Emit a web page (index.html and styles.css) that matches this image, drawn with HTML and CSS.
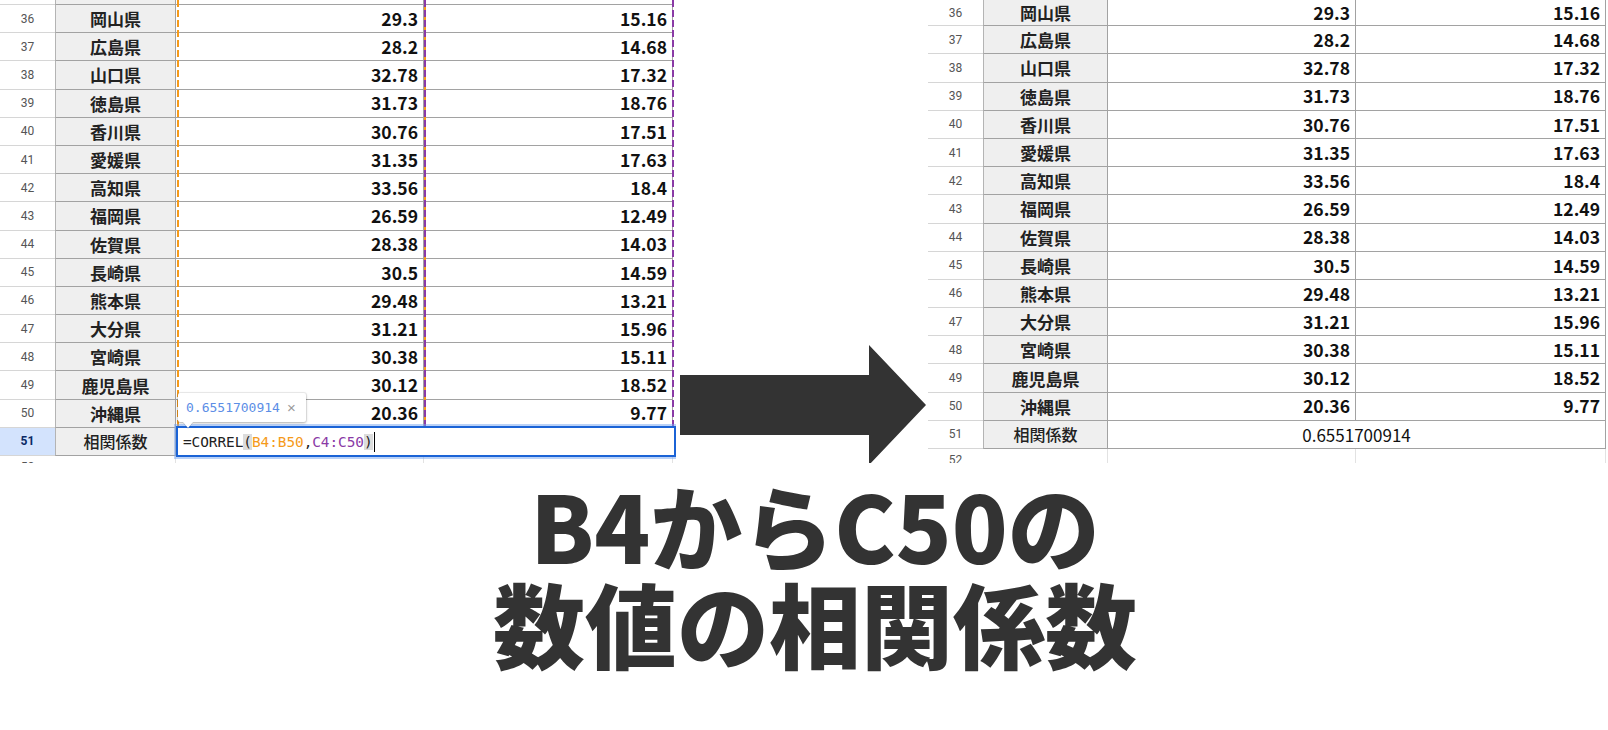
FILE: index.html
```html
<!DOCTYPE html>
<html lang="ja">
<head>
<meta charset="utf-8">
<title>CORREL</title>
<link rel="stylesheet" href="styles.css">
</head>
<body>
<div class="page">
  <div class="top">
    <div class="sheet sheet-left">
      <div class="row row-cut"><div class="rn"></div><div class="nm"></div><div class="num"></div><div class="num"></div></div>
      <div class="row"><div class="rn">36</div><div class="nm">岡山県</div><div class="num">29.3</div><div class="num">15.16</div></div>
      <div class="row"><div class="rn">37</div><div class="nm">広島県</div><div class="num">28.2</div><div class="num">14.68</div></div>
      <div class="row"><div class="rn">38</div><div class="nm">山口県</div><div class="num">32.78</div><div class="num">17.32</div></div>
      <div class="row"><div class="rn">39</div><div class="nm">徳島県</div><div class="num">31.73</div><div class="num">18.76</div></div>
      <div class="row"><div class="rn">40</div><div class="nm">香川県</div><div class="num">30.76</div><div class="num">17.51</div></div>
      <div class="row"><div class="rn">41</div><div class="nm">愛媛県</div><div class="num">31.35</div><div class="num">17.63</div></div>
      <div class="row"><div class="rn">42</div><div class="nm">高知県</div><div class="num">33.56</div><div class="num">18.4</div></div>
      <div class="row"><div class="rn">43</div><div class="nm">福岡県</div><div class="num">26.59</div><div class="num">12.49</div></div>
      <div class="row"><div class="rn">44</div><div class="nm">佐賀県</div><div class="num">28.38</div><div class="num">14.03</div></div>
      <div class="row"><div class="rn">45</div><div class="nm">長崎県</div><div class="num">30.5</div><div class="num">14.59</div></div>
      <div class="row"><div class="rn">46</div><div class="nm">熊本県</div><div class="num">29.48</div><div class="num">13.21</div></div>
      <div class="row"><div class="rn">47</div><div class="nm">大分県</div><div class="num">31.21</div><div class="num">15.96</div></div>
      <div class="row"><div class="rn">48</div><div class="nm">宮崎県</div><div class="num">30.38</div><div class="num">15.11</div></div>
      <div class="row"><div class="rn">49</div><div class="nm">鹿児島県</div><div class="num">30.12</div><div class="num">18.52</div></div>
      <div class="row"><div class="rn">50</div><div class="nm">沖縄県</div><div class="num">20.36</div><div class="num">9.77</div></div>
      <div class="row row-active"><div class="rn">51</div><div class="nm nm-label">相関係数</div><div class="num"></div><div class="num"></div></div>
      <div class="row row-empty"><div class="rn">52</div><div class="nm"></div><div class="num"></div><div class="num"></div></div>

      <div class="range range-b"></div>
      <div class="range range-bc"></div>
      <div class="range range-c"></div>

      <div class="editor">
        <span class="f-dark">=CORREL</span><span class="paren">(</span><span class="f-orange">B4:B50</span><span class="f-dark">,</span><span class="f-purple">C4:C50</span><span class="paren">)</span><span class="caret"></span>
      </div>
      <div class="tip"><span class="tip-val">0.6551700914</span><span class="tip-x">×</span></div>
    </div>

    <div class="arrow-col">
      <svg class="arrow" width="248" height="122" viewBox="0 0 248 122">
        <polygon points="0,31 189,31 189,1 246,61 189,121 189,91 0,91" fill="#333333"/>
      </svg>
    </div>

    <div class="sheet sheet-right">
      <div class="row row-first"><div class="rn">36</div><div class="nm">岡山県</div><div class="num">29.3</div><div class="num">15.16</div></div>
      <div class="row"><div class="rn">37</div><div class="nm">広島県</div><div class="num">28.2</div><div class="num">14.68</div></div>
      <div class="row"><div class="rn">38</div><div class="nm">山口県</div><div class="num">32.78</div><div class="num">17.32</div></div>
      <div class="row"><div class="rn">39</div><div class="nm">徳島県</div><div class="num">31.73</div><div class="num">18.76</div></div>
      <div class="row"><div class="rn">40</div><div class="nm">香川県</div><div class="num">30.76</div><div class="num">17.51</div></div>
      <div class="row"><div class="rn">41</div><div class="nm">愛媛県</div><div class="num">31.35</div><div class="num">17.63</div></div>
      <div class="row"><div class="rn">42</div><div class="nm">高知県</div><div class="num">33.56</div><div class="num">18.4</div></div>
      <div class="row"><div class="rn">43</div><div class="nm">福岡県</div><div class="num">26.59</div><div class="num">12.49</div></div>
      <div class="row"><div class="rn">44</div><div class="nm">佐賀県</div><div class="num">28.38</div><div class="num">14.03</div></div>
      <div class="row"><div class="rn">45</div><div class="nm">長崎県</div><div class="num">30.5</div><div class="num">14.59</div></div>
      <div class="row"><div class="rn">46</div><div class="nm">熊本県</div><div class="num">29.48</div><div class="num">13.21</div></div>
      <div class="row"><div class="rn">47</div><div class="nm">大分県</div><div class="num">31.21</div><div class="num">15.96</div></div>
      <div class="row"><div class="rn">48</div><div class="nm">宮崎県</div><div class="num">30.38</div><div class="num">15.11</div></div>
      <div class="row"><div class="rn">49</div><div class="nm">鹿児島県</div><div class="num">30.12</div><div class="num">18.52</div></div>
      <div class="row"><div class="rn">50</div><div class="nm">沖縄県</div><div class="num">20.36</div><div class="num">9.77</div></div>
      <div class="row row-merged"><div class="rn">51</div><div class="nm nm-label">相関係数</div><div class="merged">0.6551700914</div></div>
      <div class="row row-empty"><div class="rn">52</div><div class="nm"></div><div class="num"></div><div class="num"></div></div>
    </div>
  </div>

  <div class="caption">
    <div class="cap-line">B4からC50の</div>
    <div class="cap-line">数値の相関係数</div>
  </div>
</div>
</body>
</html>
```

FILE: styles.css
```css
* { box-sizing: border-box; }

html, body {
  margin: 0;
  padding: 0;
  background: #ffffff;
}

.page {
  width: 1608px;
  height: 730px;
  overflow: hidden;
  display: flex;
  flex-direction: column;
}

.top {
  display: flex;
  height: 463px;
  overflow: hidden;
}

/* ---------- sheets ---------- */
.sheet {
  position: relative;
  display: flex;
  flex-direction: column;
  overflow: hidden;
  height: 463px;
  flex: none;
}

.sheet-left { width: 676px; }
.sheet-right { width: 680px; }

.row {
  display: grid;
  height: 28.2px;
  flex: none;
}

.sheet-left .row { grid-template-columns: 55px 121px 248px 249px; }
.sheet-right .row { grid-template-columns: 55px 125px 248px 250px; }

.row-cut { height: 5px; }
.row-first { height: 26.2px; }

.rn {
  font-family: Roboto, "Liberation Sans", sans-serif;
  font-size: 12px;
  color: #555555;
  display: flex;
  align-items: center;
  justify-content: center;
  border-bottom: 1px solid #d6d6d6;
}

.nm {
  font-family: "Noto Sans CJK JP", sans-serif;
  font-weight: 700;
  font-size: 17px;
  color: #222222;
  background: #efefef;
  display: flex;
  align-items: center;
  justify-content: center;
  border-left: 1px solid #b4b4b4;
  border-right: 1px solid #a2a2a2;
  border-bottom: 1px solid #a2a2a2;
  line-height: 1;
}

.nm-label {
  font-size: 16px;
  font-weight: 500;
}

.num {
  font-family: "Noto Sans CJK JP", sans-serif;
  font-weight: 700;
  font-size: 17.5px;
  color: #111111;
  display: flex;
  align-items: center;
  justify-content: flex-end;
  padding-right: 5px;
  border-right: 1px solid #a2a2a2;
  border-bottom: 1px solid #a2a2a2;
  line-height: 1;
}

.merged {
  grid-column: 3 / span 2;
  font-family: "Noto Sans CJK JP", sans-serif;
  font-weight: 400;
  font-size: 17px;
  color: #111111;
  display: flex;
  align-items: center;
  justify-content: center;
  border-right: 1px solid #a2a2a2;
  border-bottom: 1px solid #a2a2a2;
}

.row-active .rn {
  background: #d3e3fd;
  color: #0b2a66;
  font-weight: 700;
}

.row-empty .rn { border-bottom: none; align-items: flex-start; padding-top: 4px; }
.row-empty .nm,
.row-empty .num {
  background: #ffffff;
  border-left: none;
  border-bottom: none;
  border-right: 1px solid #e2e2e2;
}

/* range highlights (overlays) */
.range {
  position: absolute;
  top: 0;
  width: 2px;
  height: 428px;
}
.range-b {
  left: 177px;
  background: repeating-linear-gradient(to bottom, #f59a1b 0 7px, transparent 7px 10px);
}
.range-bc {
  left: 424px;
  background: repeating-linear-gradient(to bottom, #8a3aa6 0 7px, #f59a1b 7px 10px);
}
.range-c {
  left: 672px;
  background: repeating-linear-gradient(to bottom, #8a3aa6 0 7px, transparent 7px 10px);
}

/* editing cell */
.editor {
  position: absolute;
  left: 176px;
  top: 426px;
  width: 500px;
  height: 31px;
  border: 2px solid #1b63d6;
  box-shadow: 0 0 0 2px rgba(120, 165, 240, 0.5);
  background: #ffffff;
  display: flex;
  align-items: center;
  padding-left: 5px;
  font-family: "DejaVu Sans Mono", "Liberation Mono", monospace;
  font-size: 14.4px;
  letter-spacing: -0.05px;
}
.f-dark { color: #222222; }
.f-orange { color: #f59a1b; }
.f-purple { color: #8a3aa6; }
.paren { color: #222222; background: #dcdcdc; }
.caret {
  width: 1.5px;
  height: 20px;
  background: #000000;
  margin-left: 1px;
}

/* result tooltip */
.tip {
  position: absolute;
  left: 178px;
  top: 393px;
  width: 128px;
  height: 29px;
  background: #ffffff;
  border-radius: 2px;
  box-shadow: 0 1px 3px rgba(0, 0, 0, 0.28), 0 0 0 1px rgba(0, 0, 0, 0.06);
  display: flex;
  align-items: center;
  padding-left: 8px;
  gap: 7px;
  font-family: "DejaVu Sans Mono", "Liberation Mono", monospace;
  font-size: 13px;
}
.tip::after {
  content: "";
  position: absolute;
  left: 5px;
  bottom: -6px;
  width: 0;
  height: 0;
  border-left: 5px solid transparent;
  border-right: 5px solid transparent;
  border-top: 6px solid #ffffff;
  filter: drop-shadow(0 1px 0 rgba(0,0,0,0.15));
}
.tip-val { color: #5c8ee6; }
.tip-x {
  color: #9a9a9a;
  font-family: "Liberation Sans", sans-serif;
  font-size: 15px;
}

/* arrow */
.arrow-col {
  width: 252px;
  flex: none;
  padding-top: 344px;
  padding-left: 4px;
}
.arrow { display: block; }

/* caption */
.caption {
  padding-top: 12px;
  padding-left: 22px;
  text-align: center;
  font-family: "Noto Sans CJK JP", sans-serif;
  font-weight: 900;
  font-size: 92px;
  line-height: 98px;
  color: #333333;
}
.cap-line { white-space: nowrap; }
```
